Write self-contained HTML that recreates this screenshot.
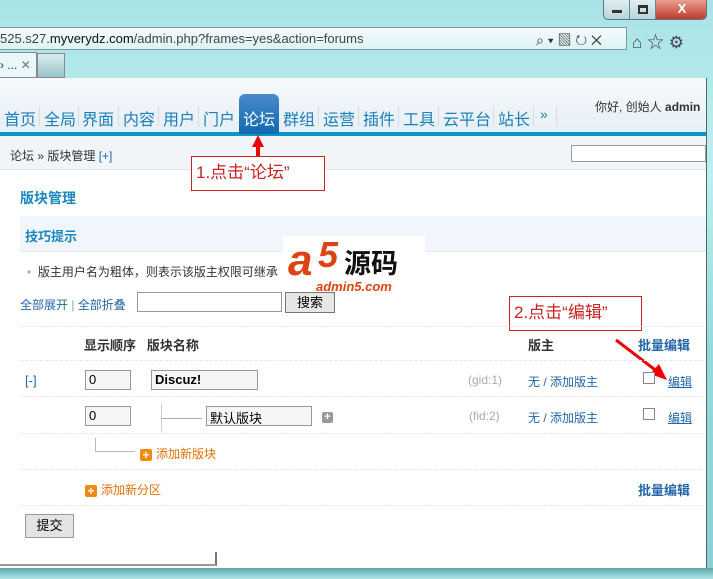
<!DOCTYPE html>
<html><head><meta charset="utf-8"><style>
*{margin:0;padding:0;box-sizing:border-box}
body{width:713px;height:579px;overflow:hidden;position:relative;font-family:"Liberation Sans","Noto Sans CJK SC",sans-serif;font-size:13px;background:#8fd3d8}
.a{position:absolute;white-space:nowrap}
.chrome{left:0;top:0;width:713px;height:579px;background:linear-gradient(180deg,#a9e3e6 0%,#bfeef0 30%,#98d8dc 60%,#8ccfd4 100%)}
.lnk{color:#2366a8}
.gray{color:#aaa}
.org{color:#e0700a}
.inp{position:absolute;border:1px solid #999;background:#f6f6f6;height:20px;font-size:13px;padding:1px 3px}
.dash{position:absolute;left:20px;width:682px;border-top:1px dashed #e3e8ec}
.plus{display:inline-block;width:12px;height:12px;background:#f08a10;border-radius:2px;color:#fff;font-size:12px;line-height:12px;text-align:center;font-weight:bold;vertical-align:-1px;margin-right:4px}
.nv{position:absolute;top:106px;font-size:16px;color:#1a7fba}
.sp{position:absolute;top:106px;width:1px;height:20px;background:#d5dde5}
</style></head><body>
<div class="a chrome"></div>
<div class="a" style="left:603px;top:0;width:104px;height:20px;border:1px solid #5a7a80;border-top:none;border-radius:0 0 5px 5px;background:linear-gradient(#dfeff2,#b7d5da);overflow:hidden">
<div class="a" style="left:0;top:0;width:26px;height:19px;border-right:1px solid #6a8a90"></div>
<div class="a" style="left:26px;top:0;width:26px;height:19px;border-right:1px solid #6a8a90"></div>
<div class="a" style="left:52px;top:0;width:52px;height:19px;background:linear-gradient(#e8a090,#c0392b);color:#fff;font-weight:bold;text-align:center;line-height:18px">X</div>
<div class="a" style="left:8px;top:10px;width:10px;height:3px;background:#333"></div>
<div class="a" style="left:34px;top:5px;width:10px;height:9px;border:2px solid #333;border-top-width:3px"></div>
</div>
<div class="a" style="left:0;top:27px;width:627px;height:23px;border:1px solid #7a9aa0;border-left:none;background:linear-gradient(#f4fbfc,#dff2f4)"></div>
<div class="a" style="left:0;top:31px;font-size:13px;color:#444">525.s27.<span style="color:#111">myverydz.com</span>/admin.php?frames=yes&amp;action=forums</div>
<div class="a" style="left:536px;top:30px;font-size:14px;color:#333">⌕ ▾ ▧ ↻ ✕</div>
<div class="a" style="left:632px;top:28px;font-size:17px;color:#445">⌂ ☆ ⚙</div>
<div class="a" style="left:0;top:52px;width:37px;height:26px;background:#e9f7f8;border:1px solid #889;border-left:none;font-size:12px;line-height:24px;color:#333">› ... <span style="color:#777">✕</span></div>
<div class="a" style="left:37px;top:53px;width:28px;height:25px;background:linear-gradient(#d8eef0,#98c4c8);border:1px solid #889"></div>
<div class="a" style="left:0;top:78px;width:707px;height:490px;background:#fff;border-right:1px solid #4a6a70"></div>
<div class="a" style="left:0;top:78px;width:706px;height:58px;background:linear-gradient(#f6f9fb,#e6eff5)"></div>
<div class="a" style="left:0;top:132px;width:706px;height:4px;background:#0d95c8"></div>
<div class="a" style="left:239px;top:94px;width:40px;height:40px;background:linear-gradient(#4a8ac8,#1069b0);border-radius:6px 6px 0 0"></div>
<div class="nv" style="left:4px">首页</div><div class="sp" style="left:39px"></div>
<div class="nv" style="left:44px">全局</div><div class="sp" style="left:78px"></div>
<div class="nv" style="left:82px">界面</div><div class="sp" style="left:118px"></div>
<div class="nv" style="left:123px">内容</div><div class="sp" style="left:158px"></div>
<div class="nv" style="left:163px">用户</div><div class="sp" style="left:198px"></div>
<div class="nv" style="left:203px">门户</div>
<div class="nv" style="left:243px;color:#fff">论坛</div>
<div class="nv" style="left:283px">群组</div><div class="sp" style="left:318px"></div>
<div class="nv" style="left:323px">运营</div><div class="sp" style="left:358px"></div>
<div class="nv" style="left:363px">插件</div><div class="sp" style="left:398px"></div>
<div class="nv" style="left:403px">工具</div><div class="sp" style="left:438px"></div>
<div class="nv" style="left:443px">云平台</div><div class="sp" style="left:493px"></div>
<div class="nv" style="left:498px">站长</div><div class="sp" style="left:533px"></div>
<div class="nv" style="left:540px;font-size:14px">»</div><div class="sp" style="left:556px"></div>
<div class="a" style="left:595px;top:98px;font-size:12px;color:#333">你好, 创始人 <b>admin</b></div>
<div class="a" style="left:0;top:136px;width:706px;height:34px;background:#f1f5f8;border-bottom:1px solid #dde5ea"></div>
<div class="a" style="left:10px;top:147px;font-size:12px;color:#333">论坛 » 版块管理 <span class="lnk">[+]</span></div>
<div class="a" style="left:571px;top:145px;width:135px;height:17px;border:1px solid #999;background:#fff"></div>
<div class="a" style="left:252px;top:135px;width:0;height:0;border-left:6px solid transparent;border-right:6px solid transparent;border-bottom:12px solid #e00"></div>
<div class="a" style="left:256px;top:146px;width:4px;height:10px;background:#e00"></div>
<div class="a" style="left:191px;top:156px;width:134px;height:35px;border:1px solid #c22;background:#fff;color:#c22;font-size:17px;line-height:32px;padding-left:4px">1.点击“论坛”</div>
<div class="a" style="left:20px;top:188px;font-size:14px;font-weight:bold;color:#1a87bf">版块管理</div>
<div class="a" style="left:20px;top:216px;width:686px;height:36px;background:#f0f6fb;border-bottom:1px solid #e3ebf0"></div>
<div class="a" style="left:25px;top:226px;font-size:13px;font-weight:bold;color:#1a87bf">技巧提示</div>
<div class="a" style="left:27px;top:263px;font-size:12px;color:#333"><span style="color:#aaa">•</span>&nbsp; 版主用户名为粗体，则表示该版主权限可继承</div>
<div class="a" style="left:283px;top:236px;width:142px;height:62px;background:#fff"></div>
<div class="a" style="left:288px;top:236px;font-size:44px;font-weight:bold;font-style:italic;color:#d41;line-height:50px">a</div>
<div class="a" style="left:318px;top:234px;font-size:36px;font-weight:bold;font-style:italic;color:#d41">5</div>
<div class="a" style="left:344px;top:242px;font-size:27px;font-weight:bold;color:#111">源码</div>
<div class="a" style="left:316px;top:279px;font-size:13px;font-weight:bold;font-style:italic;color:#d41">admin5.com</div>
<div class="a lnk" style="left:20px;top:296px;font-size:12px">全部展开 <span style="color:#999">|</span> 全部折叠</div>
<div class="a" style="left:137px;top:292px;width:145px;height:20px;border:1px solid #999;background:#fff"></div>
<div class="a" style="left:285px;top:292px;width:50px;height:21px;border:1px solid #777;background:#e6e6e6;font-size:13px;text-align:center;line-height:19px">搜索</div>
<div class="a" style="left:509px;top:296px;width:133px;height:35px;border:1px solid #c22;background:#fff;color:#c22;font-size:17px;line-height:32px;padding-left:4px">2.点击“编辑”</div>
<svg class="a" style="left:612px;top:336px" width="60" height="50"><line x1="4" y1="4" x2="46" y2="36" stroke="#e00" stroke-width="3"/><polygon points="55,44 38,38 47,28" fill="#e00"/></svg>
<div class="dash" style="top:326px"></div>
<div class="a" style="left:84px;top:335px;font-size:13px;font-weight:bold;color:#333">显示顺序&nbsp;&nbsp; 版块名称</div>
<div class="a" style="left:528px;top:335px;font-size:13px;font-weight:bold;color:#333">版主</div>
<div class="a lnk" style="left:638px;top:335px;font-size:13px;font-weight:bold">批量编辑</div>
<div class="dash" style="top:360px"></div>
<div class="a lnk" style="left:25px;top:373px">[-]</div>
<div class="inp" style="left:85px;top:370px;width:46px">0</div>
<div class="inp" style="left:151px;top:370px;width:107px;font-weight:bold">Discuz!</div>
<div class="a gray" style="left:468px;top:373px;font-size:12px">(gid:1)</div>
<div class="a lnk" style="left:528px;top:373px;font-size:12px">无 / 添加版主</div>
<div class="a" style="left:643px;top:372px;width:12px;height:12px;border:1px solid #888;background:#fff"></div>
<div class="a lnk" style="left:668px;top:373px;font-size:12px;text-decoration:underline">编辑</div>
<div class="dash" style="top:396px"></div>
<div class="inp" style="left:85px;top:406px;width:46px">0</div>
<div class="a" style="left:161px;top:404px;width:1px;height:27px;background:#ccc"></div>
<div class="a" style="left:162px;top:418px;width:40px;height:1px;background:#aaa"></div>
<div class="inp" style="left:206px;top:406px;width:106px">默认版块</div>
<div class="a" style="left:322px;top:412px;width:11px;height:11px;background:#999;border-radius:2px;color:#fff;font-size:11px;line-height:11px;text-align:center;font-weight:bold">+</div>
<div class="a gray" style="left:469px;top:409px;font-size:12px">(fid:2)</div>
<div class="a lnk" style="left:528px;top:409px;font-size:12px">无 / 添加版主</div>
<div class="a" style="left:643px;top:408px;width:12px;height:12px;border:1px solid #888;background:#fff"></div>
<div class="a lnk" style="left:668px;top:409px;font-size:12px;text-decoration:underline">编辑</div>
<div class="dash" style="top:433px"></div>
<div class="a" style="left:95px;top:438px;width:1px;height:14px;background:#bbb"></div>
<div class="a" style="left:95px;top:451px;width:40px;height:1px;background:#bbb"></div>
<div class="a org" style="left:140px;top:445px;font-size:12px"><span class="plus">+</span>添加新版块</div>
<div class="dash" style="top:469px"></div>
<div class="a org" style="left:85px;top:481px;font-size:12px"><span class="plus">+</span>添加新分区</div>
<div class="a lnk" style="left:638px;top:480px;font-size:13px;font-weight:bold">批量编辑</div>
<div class="dash" style="top:505px"></div>
<div class="a" style="left:25px;top:514px;width:49px;height:24px;border:1px solid #999;background:#e3e3e3;text-align:center;line-height:22px;font-size:13px">提交</div>
<div class="a" style="left:0;top:552px;width:217px;height:14px;border-right:2px solid #777;border-bottom:2px solid #999"></div>
<div class="a" style="left:0;top:568px;width:713px;height:11px;background:linear-gradient(#5aa5aa,#b2e6e8)"></div>
</body></html>
